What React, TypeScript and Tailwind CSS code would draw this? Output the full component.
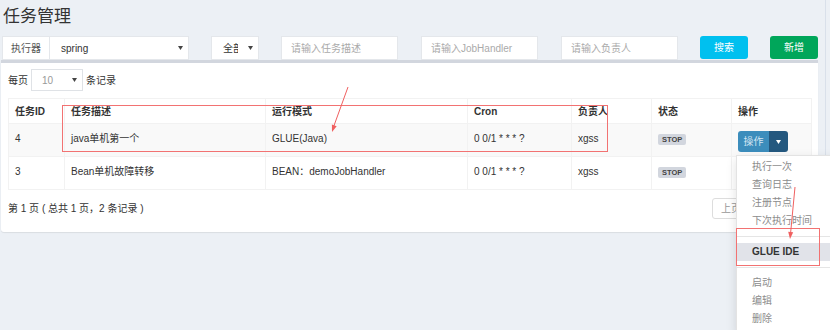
const font = "font-['Liberation_Sans','Noto_Sans_CJK_SC',sans-serif]";

const jobs = [
  { id: 4, desc: "java单机第一个", mode: "GLUE(Java)", cron: "0 0/1 * * * ?", owner: "xgss" },
  { id: 3, desc: "Bean单机故障转移", mode: "BEAN：demoJobHandler", cron: "0 0/1 * * * ?", owner: "xgss" },
];

function Caret({ className = "" }: { className?: string }) {
  return (
    <svg width="5" height="4" viewBox="0 0 5 4" className={className}>
      <path d="M0 0h5L2.5 4z" fill="currentColor" />
    </svg>
  );
}

function OpButton() {
  return (
    <div className="-mt-[1px] flex h-[21px] w-[50px] overflow-hidden rounded-[3px]">
      <span className="flex w-[31px] items-center justify-center bg-[#3c8dbc] text-[#d4e6f3]">操作</span>
      <span className="flex flex-1 items-center justify-center bg-[#24587f] text-white">
        <Caret />
      </span>
    </div>
  );
}

const cell = "border border-[#f2f2f2] px-[6px] pt-[8px] align-top leading-[14px]";

export default function App() {
  return (
    <div className={`relative h-[330px] w-[830px] overflow-hidden bg-[#ecf0f5] text-[10px] text-[#333] ${font}`}>
      <div className="h-full w-[826px] border-r border-[#d9e0ea]">
        {/* Title */}
        <h1 className="pl-[3px] pt-[5px] text-[17px] leading-[24px] text-[#333]">任务管理</h1>

        {/* Filters */}
        <div className="mt-[7px] flex h-[24px] pl-[2px]">
          <div className="flex w-[187px] border border-[#e4e7eb] bg-white">
            <span className="flex w-[47px] items-center justify-center border-r border-[#e4e7eb] text-[#555]">执行器</span>
            <div className="flex flex-1 items-center justify-between pl-[11px] pr-[5px]">
              <span>spring</span>
              <Caret className="text-[#444]" />
            </div>
          </div>
          <div className="ml-[22px] flex w-[48px] items-center border border-[#e4e7eb] bg-white pl-[11px] pr-[5px]">
            <span className="w-[15px] overflow-hidden whitespace-nowrap">全部</span>
            <Caret className="ml-auto text-[#444]" />
          </div>
          <input
            placeholder="请输入任务描述"
            className="ml-[22px] w-[117px] border border-[#e4e7eb] bg-white px-[9px] outline-none placeholder:text-[#aaa]"
          />
          <input
            placeholder="请输入JobHandler"
            className="ml-[23px] w-[117px] border border-[#e4e7eb] bg-white px-[9px] outline-none placeholder:text-[#aaa]"
          />
          <input
            placeholder="请输入负责人"
            className="ml-[23px] w-[117px] border border-[#e4e7eb] bg-white px-[9px] outline-none placeholder:text-[#aaa]"
          />
          <button className="ml-[22px] h-[23px] w-[48px] rounded-[3px] bg-[#00c0ef] text-white">搜索</button>
          <button className="ml-[22px] h-[23px] w-[48px] rounded-[3px] bg-[#00a65a] text-white">新增</button>
        </div>

        {/* Box */}
        <div className="ml-[1px] w-[817px] rounded-b-[3px] border-t-[3px] border-[#d2d6de] bg-white px-[7px] pb-[13px] pt-[6px] shadow-[0_1px_1px_rgba(0,0,0,0.08)]">
          <div className="flex h-[22px] items-center">
            <span>每页</span>
            <div className="ml-[3px] flex h-[22px] w-[52px] items-center border border-[#dfe2e6] pl-[10px] pr-[5px] text-[#999]">
              <span>10</span>
              <Caret className="ml-auto text-[#444]" />
            </div>
            <span className="ml-[3px]">条记录</span>
          </div>

          <table className="mt-[7px] w-[803px] table-fixed border-collapse">
            <colgroup>
              <col className="w-[56px]" />
              <col className="w-[201px]" />
              <col className="w-[202px]" />
              <col className="w-[104px]" />
              <col className="w-[80px]" />
              <col className="w-[80px]" />
              <col className="w-[80px]" />
            </colgroup>
            <thead>
              <tr className="h-[25px] text-left">
                {["任务ID", "任务描述", "运行模式", "Cron", "负责人", "状态", "操作"].map((h) => (
                  <th key={h} className="border border-[#f2f2f2] px-[6px] pt-[6px] align-top font-bold leading-[14px]">
                    {h}
                  </th>
                ))}
              </tr>
            </thead>
            <tbody>
              {jobs.map((j, i) => (
                <tr key={j.id} className={`h-[33px] ${i === 0 ? "bg-[#f9f9f9]" : "bg-white"}`}>
                  <td className={cell}>{j.id}</td>
                  <td className={cell}>{j.desc}</td>
                  <td className={cell}>{j.mode}</td>
                  <td className={cell}>{j.cron}</td>
                  <td className={cell}>{j.owner}</td>
                  <td className={cell}>
                    <span className="inline-block rounded-[2px] bg-[#d2d6de] px-[4px] align-middle text-[7.5px] font-bold leading-[11px] text-[#444]">
                      STOP
                    </span>
                  </td>
                  <td className={cell}>
                    <OpButton />
                  </td>
                </tr>
              ))}
            </tbody>
          </table>

          <div className="mt-[8px] flex h-[21px] items-center justify-between">
            <span>第 1 页 ( 总共 1 页，2 条记录 )</span>
            <div className="flex h-[21px] text-[#999]">
              <span className="flex w-[50px] items-center rounded-l-[3px] border border-[#ddd] pl-[8px]">上页</span>
              <span className="flex w-[49px] items-center rounded-r-[3px] border border-l-0 border-[#ddd] pl-[8px]">下页</span>
            </div>
          </div>
        </div>
      </div>

      {/* Open dropdown menu */}
      <div className="absolute left-[736px] top-[155px] w-[110px] border border-[#e3e3e3] bg-white pb-[4px] pt-[2px] shadow-[0_4px_10px_rgba(0,0,0,0.12)]">
        {["执行一次", "查询日志", "注册节点", "下次执行时间"].map((t) => (
          <div key={t} className="h-[18px] pl-[15px] leading-[18px] text-[#8c8c8c]">
            {t}
          </div>
        ))}
        <div className="my-[6px] h-px bg-[#e5e5e5]" />
        <div className="h-[18px] bg-[#e1e3e9] pl-[15px] font-bold leading-[18px] text-[#333]">GLUE IDE</div>
        <div className="my-[6px] h-px bg-[#e5e5e5]" />
        {["启动", "编辑", "删除"].map((t) => (
          <div key={t} className="h-[18px] pl-[15px] leading-[18px] text-[#8c8c8c]">
            {t}
          </div>
        ))}
      </div>

      {/* Red annotations */}
      <div className="absolute left-[62px] top-[105px] h-[47px] w-[546px] border border-[#f27272]" />
      <div className="absolute left-[736px] top-[228px] h-[38px] w-[84px] border border-[#f27272]" />
      <svg className="pointer-events-none absolute left-0 top-0" width="830" height="330">
        <line x1="348" y1="87" x2="333.5" y2="127" stroke="#f06060" strokeWidth="1" />
        <polygon points="336.7,126.2 332,132 331.9,124.6" fill="#f06060" />
        <line x1="795" y1="187" x2="790.6" y2="233" stroke="#f06060" strokeWidth="1" />
        <polygon points="793.2,232.3 790,239 788.2,231.8" fill="#f06060" />
      </svg>
    </div>
  );
}
